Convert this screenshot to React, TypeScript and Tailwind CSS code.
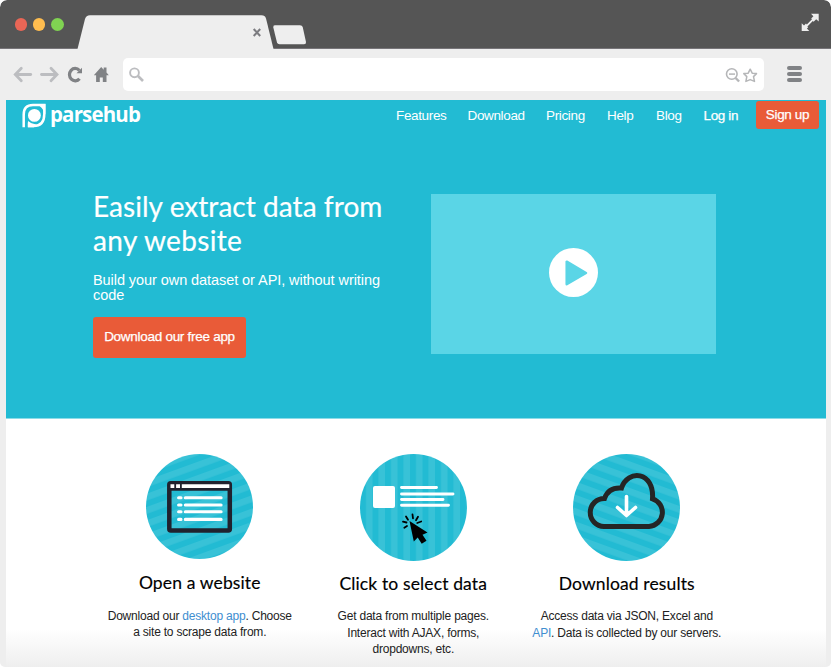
import type { ReactNode } from "react";

const sans = "font-['Liberation_Sans',Arial,sans-serif]";
const display = "font-['Lato',sans-serif]";

function BrowserBar() {
  return (
    <div className="flex h-[49px] shrink-0 items-start rounded-t-[7px] border-b border-[#777579] bg-[#555555]">
      <div className="mt-[18px] ml-[14.500px] flex w-[49px] justify-between">
        <span className="h-[13px] w-[12.5px] rounded-full bg-[#e96656]" />
        <span className="h-[13px] w-[12.5px] rounded-full bg-[#ffbd4f]" />
        <span className="h-[13px] w-[12.5px] rounded-full bg-[#80d352]" />
      </div>
      <svg className="ml-[13.500px] h-[49px] w-[230px] shrink-0" viewBox="77 0 230 49">
        <path d="M77.500 49 85 19Q86 15.200 90 15.200H261.500Q265 15.200 266 18.500L273.500 49Z" fill="#eee" />
        <path d="m253.700 29 6.500 7m0-7-6.500 7" stroke="#7c7c80" strokeWidth="2" />
        <path d="M274.800 25.200H300Q302.200 25.200 302.700 27L306 42Q306.300 44.300 304 44.300H279.500Q277.500 44.300 277 42.500L273.300 27.500Q273 25.200 274.800 25.200Z" fill="#eee" />
      </svg>
      <svg className="mt-[13px] mr-[11px] ml-auto h-[19px] w-[19px]" viewBox="801 13 19 19">
        <path d="M811 13.700H818.700V21.400L816.200 19.200 813.600 21.800 812.800 21 807.400 26.400 808.200 27.200 806.900 28.500 809.300 31H801.700V23.300L804 25.600 806 23.600 806.800 24.400 812 19.200 811.200 18.400 813.400 16.200Z" fill="#eee" />
      </svg>
    </div>
  );
}

function Toolbar() {
  return (
    <div className="flex h-[51px] shrink-0 items-start bg-[#eeeeee]">
      <svg className="h-[51px] w-[123px] shrink-0" viewBox="0 49 123 51" fill="none">
        <g stroke="#bcbdc0" strokeWidth="2.800" strokeLinecap="round">
          <path d="M30.700 74.500H16" />
          <path d="m21.300 68.300-6 6.200 6 6.200" />
          <path d="M41.500 74.500H56" />
          <path d="m51 68.300 6 6.200-6 6.200" />
        </g>
        <path d="M79.300 70.400A5.700 6.200 0 1 0 79.500 78.700" stroke="#808285" strokeWidth="3.200" />
        <path d="M82 67.700V73.200H76.500Z" fill="#808285" />
        <path d="m93.800 75.300 7.400-8.300 2.500 2.700V67.500h2.800v5l2.300 2.800h-2.300V82h-3.700v-4.500h-3V82h-3.700v-6.700Z" fill="#808285" />
      </svg>
      <div className="mt-[9px] flex h-[33px] w-[641px] items-center justify-between rounded-[5px] bg-white">
        <svg className="ml-[5px] h-[33px] w-[18px]" viewBox="128 58 18 33" fill="none" stroke="#bcbdc0">
          <circle cx="134.500" cy="72.800" r="4.400" strokeWidth="1.900" />
          <path d="m138 76 5 5" strokeWidth="2.700" />
        </svg>
        <svg className="mr-[6px] h-[33px] w-[34px]" viewBox="724 58 34 33" fill="none" stroke="#b5b6b8">
          <circle cx="731.800" cy="74" r="5.300" strokeWidth="1.600" />
          <path d="M729 74.100h6" strokeWidth="1.500" />
          <path d="m735.600 78 3.500 3.500" strokeWidth="2.400" />
          <path d="m750.200 69.200 2 4 4.300.4-3 3 1 4.800-4.300-1.800-4.300 1.800.9-4.800-3-3 4.400-.4Z" strokeWidth="1.500" strokeLinejoin="round" />
        </svg>
      </div>
      <div className="mt-[17px] ml-[23px] flex w-[15px] flex-col gap-[2px]">
        <span className="h-[4px] rounded-[2px] bg-[#808285]" />
        <span className="h-[4px] rounded-[2px] bg-[#808285]" />
        <span className="h-[4px] rounded-[2px] bg-[#808285]" />
      </div>
    </div>
  );
}

function Logo() {
  return (
    <div className="flex h-[30px] w-[390px] items-start pl-[16px] text-white">
      <svg className="mt-[3px] h-[26px] w-[25px] shrink-0" viewBox="22 103 25 26" fill="none">
        <path d="M23.700 127.300V114.500Q23.700 104.900 33 104.900H44.300V114Q44.300 126 33.500 126H29V122.500" stroke="currentColor" strokeWidth="2.500" />
        <path d="M36 104H45.400V114.500Q42.500 106.500 36 104ZM28 121Q31 124 36 124.500L34 127.200H28Z" fill="currentColor" />
        <circle cx="34.400" cy="115.400" r="6.400" fill="currentColor" />
      </svg>
      <span className="ml-[3px] origin-left scale-x-[0.930] font-['Open_Sans',sans-serif] text-[22px] leading-[26px] font-bold tracking-[-0.900px]">parsehub</span>
    </div>
  );
}

function Nav() {
  return (
    <div className="flex h-[30px] items-start text-[13.500px] leading-[31px] tracking-[-0.350px] text-white">
      <Logo />
      <span className="w-[71.500px] whitespace-nowrap">Features</span>
      <span className="w-[78.500px] whitespace-nowrap">Download</span>
      <span className="w-[61px] whitespace-nowrap">Pricing</span>
      <span className="w-[49px] whitespace-nowrap">Help</span>
      <span className="w-[47.500px] whitespace-nowrap">Blog</span>
      <span className="w-[52.500px] whitespace-nowrap [-webkit-text-stroke:0.250px_white]">Log in</span>
      <button className="mt-px h-[28px] w-[63px] rounded-[3px] bg-[#e95b38] leading-[28px] whitespace-nowrap [-webkit-text-stroke:0.250px_white]">Sign up</button>
    </div>
  );
}

function Hero() {
  return (
    <section className="h-[318px] shrink-0 bg-[#22bbd3]">
      <Nav />
      <div className="flex pt-[60px] pl-[87px] text-white">
        <div className="w-[338px]">
          <h1 className={`${display} -mt-px text-[28px] leading-[34px] tracking-[0.050px] whitespace-nowrap [-webkit-text-stroke:0.200px_white]`}>
            Easily extract data from<br /><span className="tracking-[0.350px]">any website</span>
          </h1>
          <p className="mt-[16px] text-[14.500px] leading-[15px] tracking-[-0.070px] whitespace-nowrap">
            Build your own dataset or API, without writing<br />code
          </p>
          <button className="mt-[14px] h-[41px] w-[153px] rounded-[3px] bg-[#e95b38] text-[13.500px] tracking-[-0.280px] whitespace-nowrap [-webkit-text-stroke:0.250px_white]">
            Download our free app
          </button>
        </div>
        <div className="mt-[4px] flex h-[160px] w-[285px] items-center justify-center bg-[#5ad5e6]">
          <svg className="-mt-[3px] h-[49px] w-[49px]" viewBox="0 0 49 49">
            <circle cx="24.500" cy="24.500" r="24.500" fill="white" />
            <path d="M17.700 13.700V36.200L37 25Z" fill="#5ad5e6" stroke="#5ad5e6" strokeWidth="2.500" strokeLinejoin="round" />
          </svg>
        </div>
      </div>
    </section>
  );
}

function Stripes({ id, angle, ry }: { id: string; angle: number; ry: number }) {
  return (
    <>
      <defs>
        <pattern id={id} width="100" height="12.500" patternUnits="userSpaceOnUse" patternTransform={`rotate(${angle})`}>
          <rect width="100" height="12.500" fill="#22bbd3" />
          <rect width="100" height="6.500" fill="#38c2d7" />
        </pattern>
      </defs>
      <ellipse cx="53.500" cy={ry} rx="53.500" ry={ry} fill={`url(#${id})`} />
    </>
  );
}

function WebsiteArt() {
  return (
    <svg className="h-[107px] w-[107px]" viewBox="0 0 107 107">
      <Stripes id="site-stripes" angle={-20} ry={52.5} />
      <rect x="23.300" y="29.200" width="60.500" height="47.300" rx="1.500" fill="none" stroke="#20222e" strokeWidth="4.500" />
      <path d="M22.500 32.500H84.500" stroke="#20222e" strokeWidth="8.500" />
      <path d="M24.500 32.200h3.800M30.100 32.200h3.900M35.800 32.200H83.300" stroke="white" strokeWidth="3.800" />
      <path d="M32.600 43.700h2.400M39.300 43.700h35.800M32.600 51h2.400M39.300 51h35.800M32.600 57.700h2.400M39.300 57.700h35.800M32.600 65.400h2.400M39.300 65.400h35.800" stroke="white" strokeWidth="3.100" strokeLinecap="round" />
    </svg>
  );
}

function SelectArt() {
  return (
    <svg className="h-[107px] w-[107px]" viewBox="0 0 107 107">
      <Stripes id="select-stripes" angle={90} ry={53.5} />
      <rect x="13" y="32" width="22" height="22" rx="2" fill="white" />
      <path d="M41.500 33.500h35M41.500 40h51.500M41.500 45.500h41.500M41.500 51.300h47" stroke="white" strokeWidth="2.900" strokeLinecap="round" />
      <path d="m49.500 67 4.300 20.500 3.900-4 4 6.300 4.800-3-4-6.100 5-2.200Z" fill="black" />
      <path d="m48 65.800-2-3.300M53 64.300l-.5-3.800M56 66.200l2-3.500M57.200 69l4-1.500M46.500 68.500l-3.500-.8M47 72l-2.700 1.800" stroke="black" strokeWidth="1.800" strokeLinecap="round" />
    </svg>
  );
}

function CloudArt() {
  return (
    <svg className="h-[107px] w-[107px]" viewBox="0 0 107 107">
      <Stripes id="cloud-stripes" angle={20} ry={53.5} />
      <path d="M31 72.500A14 14 0 0 1 31.500 44.500Q35.500 33 48.500 34C54.500 15 81.500 17 79.500 44.800A14.200 14.200 0 0 1 76 72.500Z" fill="none" stroke="#252525" strokeWidth="5" />
      <path d="M53.500 42.500v19M44.500 53.500l9 8 9-8" fill="none" stroke="white" strokeWidth="3.600" strokeLinecap="round" strokeLinejoin="round" />
    </svg>
  );
}

function Feature({ art, title, children, offset }: { art: ReactNode; title: string; children: ReactNode; offset: string }) {
  return (
    <article className="flex w-[213.500px] flex-col items-center text-center">
      {art}
      <div className={offset}>
        <h2 className={`${display} text-[17.500px] leading-[24px] tracking-[0.130px] whitespace-nowrap text-black [-webkit-text-stroke:0.150px_black]`}>{title}</h2>
        <p className="mt-[12.500px] text-[12px] leading-[16.500px] tracking-[-0.210px] whitespace-nowrap text-[#222]">{children}</p>
      </div>
    </article>
  );
}

export default function App() {
  return (
    <div className="h-[667px] w-[831px] overflow-hidden bg-white">
      <div className={`flex h-[667px] flex-col overflow-hidden rounded-t-[7px] rounded-b-[5px] bg-[#eeeeee] ${sans}`}>
        <BrowserBar />
        <Toolbar />
        <main className="mr-[5px] ml-[6px] flex h-[567px] flex-col">
          <Hero />
          <section className="flex h-[249px] items-start border-t border-[#8bdce8] bg-[linear-gradient(to_bottom,#ffffff_0,#ffffff_210px,#eeeeee_249px)] pt-[35px] pl-[87px]">
            <Feature art={<WebsiteArt />} title="Open a website" offset="mt-[10px]">
              Download our <a className="text-[#408ed0]">desktop app</a>. Choose<br />a site to scrape data from.
            </Feature>
            <Feature art={<SelectArt />} title="Click to select data" offset="mt-[10.500px]">
              Get data from multiple pages.<br />Interact with AJAX, forms,<br />dropdowns, etc.
            </Feature>
            <Feature art={<CloudArt />} title="Download results" offset="mt-[10.500px]">
              Access data via JSON, Excel and<br /><a className="text-[#408ed0]">API</a>. Data is collected by our servers.
            </Feature>
          </section>
        </main>
      </div>
    </div>
  );
}
